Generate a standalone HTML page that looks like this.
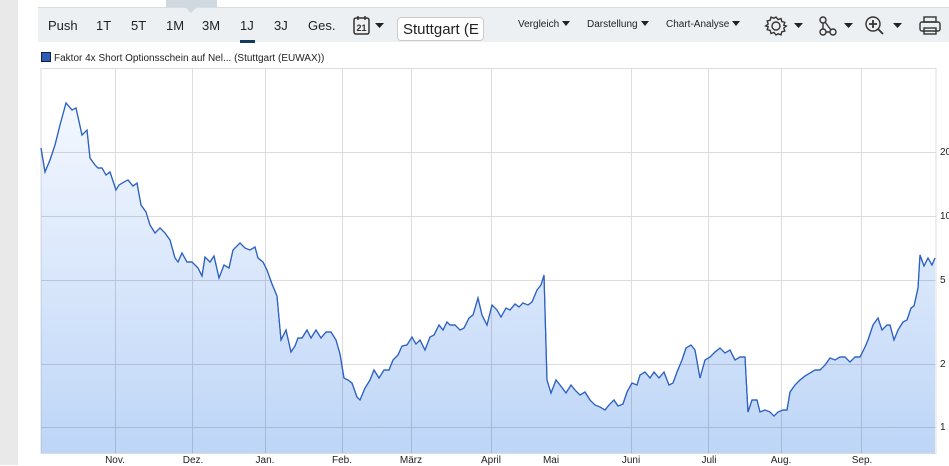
<!DOCTYPE html>
<html><head><meta charset="utf-8"><style>
body{margin:0;width:949px;height:465px;overflow:hidden;background:#fff;font-family:"Liberation Sans",sans-serif;position:relative}
.strip{position:absolute;left:0;top:0;width:18px;height:465px;background:#e9e9e9}
.tab{position:absolute;left:166px;top:0;width:51px;height:7px;background:#d0d9df}
.tab:after{content:"";position:absolute;left:19px;top:7px;border:6px solid transparent;border-top:6px solid #d0d9df}
.bar{position:absolute;left:38px;top:7px;width:911px;height:35px;background:#ecf0f3;border-top:1px solid #d7dde2;box-sizing:border-box}
.bar span{position:absolute;top:10px;font-size:13px;color:#222}
.sm{font-size:10px!important;top:11px!important}
.tri{display:inline-block;border:4.5px solid transparent;border-top:5px solid #222;border-bottom:0;margin-left:3px;vertical-align:1px}
.sel{position:absolute;left:397px;top:17px;width:87px;height:24px;background:#fff;border:1px solid #ccc;border-radius:4px;box-sizing:border-box;font-size:15px;color:#222;padding:3px 0 0 5px;overflow:hidden;white-space:nowrap}
.leg{position:absolute;left:41px;top:52px;font-size:10px;color:#222}
.leg i{display:inline-block;width:8px;height:8px;background:#2b5cb8;border:1px solid #123;margin-right:3px;vertical-align:-1px}
.x{position:absolute;top:455px;font-size:10px;color:#222;transform:translateX(-50%)}
.y{position:absolute;left:940px;font-size:10px;color:#222}
</style></head><body>
<div class="strip"></div>
<div class="bar">
<span style="left:10px">Push</span><span style="left:58px">1T</span><span style="left:93px">5T</span><span style="left:128px">1M</span><span style="left:164px">3M</span><span style="left:202px">1J</span><span style="left:236px">3J</span><span style="left:270px">Ges.</span>
<div style="position:absolute;left:202px;top:32px;width:15px;height:3px;background:#123c5c"></div>
<svg style="position:absolute;left:314px;top:7px" width="40" height="22"><rect x="2" y="3" width="15" height="16" rx="2" fill="none" stroke="#333" stroke-width="1.5"/><line x1="6" y1="1" x2="6" y2="5" stroke="#333" stroke-width="1.5"/><line x1="13" y1="1" x2="13" y2="5" stroke="#333" stroke-width="1.5"/><text x="9.5" y="16" font-size="9" font-weight="bold" text-anchor="middle" font-family="Liberation Sans" fill="#333">21</text><path d="M23 8h9l-4.5 5z" fill="#222"/></svg>
<span class="sm" style="left:480px">Vergleich<i class="tri"></i></span>
<span class="sm" style="left:549px">Darstellung<i class="tri"></i></span>
<span class="sm" style="left:628px">Chart-Analyse<i class="tri"></i></span>
<svg style="position:absolute;left:726px;top:6px" width="215" height="24" fill="none" stroke="#333" stroke-width="1.4">
<circle cx="12" cy="12" r="4"/><path d="M12 3l2 2.5 3-1 .8 3 3 .8-1 3L22.3 12l-2.5 2 1 3-3 .8-.8 3-3-1L12 21l-2-2.5-3 1-.8-3-3-.8 1-3L1.7 12l2.5-2-1-3 3-.8.8-3 3 1z"/>
<path d="M30 9h9l-4.5 5z" fill="#222" stroke="none"/>
<circle cx="59" cy="6" r="3"/><circle cx="59" cy="18" r="3"/><circle cx="69" cy="18" r="3"/><path d="M59 9v6M62 18h4M61 8l6 8"/>
<path d="M80 9h9l-4.5 5z" fill="#222" stroke="none"/>
<circle cx="109" cy="10" r="7"/><path d="M114 15l5 5M109 6v8M105 10h8" stroke-width="1.8"/>
<path d="M129 9h9l-4.5 5z" fill="#222" stroke="none"/>
<rect x="156" y="8" width="20" height="9" rx="2"/><rect x="160" y="3" width="12" height="5"/><rect x="160" y="14" width="12" height="6"/>
</svg>
</div>
<div class="tab"></div>
<div class="sel">Stuttgart (E <span style="font-size:11px">&#8964;</span></div>
<div class="leg"><i></i>Faktor 4x Short Optionsschein auf Nel... (Stuttgart (EUWAX))</div>
<svg style="position:absolute;left:0;top:0" width="949" height="465">
<defs><linearGradient id="g" x1="0" y1="0" x2="0" y2="1"><stop offset="0" stop-color="#f4f8ff"/><stop offset="1" stop-color="#bad3f7"/></linearGradient></defs>
<g stroke="#dcdcdc" stroke-width="1">
<line x1="41" y1="152.5" x2="936" y2="152.5"/><line x1="41" y1="216.5" x2="936" y2="216.5"/><line x1="41" y1="280.5" x2="936" y2="280.5"/><line x1="41" y1="364.5" x2="936" y2="364.5"/><line x1="41" y1="427.5" x2="936" y2="427.5"/>
<line x1="115.5" y1="68" x2="115.5" y2="453"/><line x1="192.5" y1="68" x2="192.5" y2="453"/><line x1="265.5" y1="68" x2="265.5" y2="453"/><line x1="342.5" y1="68" x2="342.5" y2="453"/><line x1="411.5" y1="68" x2="411.5" y2="453"/><line x1="491.5" y1="68" x2="491.5" y2="453"/><line x1="631.5" y1="68" x2="631.5" y2="453"/><line x1="708.5" y1="68" x2="708.5" y2="453"/><line x1="781.5" y1="68" x2="781.5" y2="453"/><line x1="861.5" y1="68" x2="861.5" y2="453"/>
<rect x="41" y="68.5" width="895" height="385" fill="none"/>
</g>
<path id="p" d="M41,148 L45,172 50,160 55,145 60,125 66,103 72,110 76,108 82,135 87,130 90,158 95,165 98,168 102,168 106,175 110,172 116,190 119,185 124,182 128,180 133,186 137,183 141,205 146,212 150,225 155,233 160,228 165,233 170,240 175,258 178,262 182,253 187,262 192,262 198,268 202,276 205,257 210,262 214,256 219,278 224,265 229,268 233,250 240,243 245,248 250,250 255,247 258,258 263,262 267,270 272,284 277,296 281,340 286,330 291,352 295,346 298,338 302,338 307,330 311,338 316,330 321,338 326,332 331,332 336,340 340,354 344,378 348,380 352,383 357,397 360,400 365,388 370,380 374,370 379,378 384,370 389,370 393,360 398,355 402,346 407,345 412,337 416,344 420,340 425,350 430,337 434,335 439,325 443,330 447,322 450,325 455,325 460,330 464,328 469,318 473,315 478,298 482,315 487,325 492,305 497,310 501,317 506,308 510,310 515,304 519,307 523,303 528,305 532,302 537,290 541,285 544,275 547,380 551,393 556,380 560,385 566,393 571,385 575,390 580,395 585,392 590,400 595,405 600,407 605,410 609,405 614,400 618,406 623,404 627,392 632,383 637,385 640,375 645,372 650,378 654,372 659,378 664,372 669,385 673,383 677,372 682,360 686,348 691,345 695,350 700,378 705,360 710,357 715,352 720,348 725,353 730,350 735,360 740,357 745,357 748,412 752,400 757,400 760,412 765,410 770,412 774,416 778,412 783,410 787,410 790,392 795,385 800,380 805,376 810,373 815,370 820,370 825,365 830,358 835,360 840,357 845,357 850,362 855,357 860,357 865,347 868,340 873,325 878,318 882,330 887,325 890,325 894,340 898,330 903,322 907,320 911,308 914,306 918,288 920,255 924,266 928,258 932,265 935,258" fill="none" stroke="#2d62c4" stroke-width="1.2"/>
<path d="M41,148 L45,172 50,160 55,145 60,125 66,103 72,110 76,108 82,135 87,130 90,158 95,165 98,168 102,168 106,175 110,172 116,190 119,185 124,182 128,180 133,186 137,183 141,205 146,212 150,225 155,233 160,228 165,233 170,240 175,258 178,262 182,253 187,262 192,262 198,268 202,276 205,257 210,262 214,256 219,278 224,265 229,268 233,250 240,243 245,248 250,250 255,247 258,258 263,262 267,270 272,284 277,296 281,340 286,330 291,352 295,346 298,338 302,338 307,330 311,338 316,330 321,338 326,332 331,332 336,340 340,354 344,378 348,380 352,383 357,397 360,400 365,388 370,380 374,370 379,378 384,370 389,370 393,360 398,355 402,346 407,345 412,337 416,344 420,340 425,350 430,337 434,335 439,325 443,330 447,322 450,325 455,325 460,330 464,328 469,318 473,315 478,298 482,315 487,325 492,305 497,310 501,317 506,308 510,310 515,304 519,307 523,303 528,305 532,302 537,290 541,285 544,275 547,380 551,393 556,380 560,385 566,393 571,385 575,390 580,395 585,392 590,400 595,405 600,407 605,410 609,405 614,400 618,406 623,404 627,392 632,383 637,385 640,375 645,372 650,378 654,372 659,378 664,372 669,385 673,383 677,372 682,360 686,348 691,345 695,350 700,378 705,360 710,357 715,352 720,348 725,353 730,350 735,360 740,357 745,357 748,412 752,400 757,400 760,412 765,410 770,412 774,416 778,412 783,410 787,410 790,392 795,385 800,380 805,376 810,373 815,370 820,370 825,365 830,358 835,360 840,357 845,357 850,362 855,357 860,357 865,347 868,340 873,325 878,318 882,330 887,325 890,325 894,340 898,330 903,322 907,320 911,308 914,306 918,288 920,255 924,266 928,258 932,265 935,258 L935,453 L41,453Z" fill="url(#g)" opacity="0.95" style="mix-blend-mode:multiply"/>
<use href="#p"/>
</svg>
<div class="x" style="left:115px">Nov.</div><div class="x" style="left:193px">Dez.</div><div class="x" style="left:265px">Jan.</div><div class="x" style="left:342px">Feb.</div><div class="x" style="left:411px">März</div><div class="x" style="left:491px">April</div><div class="x" style="left:551px">Mai</div><div class="x" style="left:631px">Juni</div><div class="x" style="left:709px">Juli</div><div class="x" style="left:781px">Aug.</div><div class="x" style="left:862px">Sep.</div>
<div class="y" style="top:147px">20</div><div class="y" style="top:211px">10</div><div class="y" style="top:275px">5</div><div class="y" style="top:359px">2</div><div class="y" style="top:422px">1</div>
</body></html>
